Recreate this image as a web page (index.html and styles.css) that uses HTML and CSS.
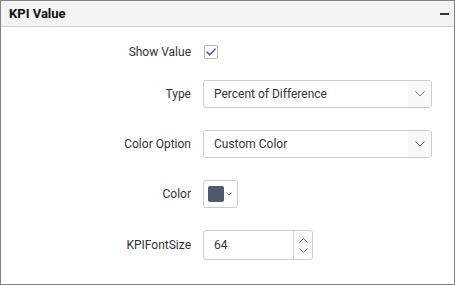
FILE: index.html
```html
<!DOCTYPE html>
<html lang="en">
<head>
  <meta charset="UTF-8" />
  <title>KPI Value</title>
  <link rel="stylesheet" href="styles.css">
</head>
<body>

  <div class="panel">
    <div class="panel-header">
      <span class="panel-title">KPI Value</span>
      <span class="collapse-icon"></span>
    </div>

    <div class="panel-body">
      <div class="field field-check">
        <label class="field-label">Show Value</label>
        <span class="checkbox">
          <svg width="10" height="8" viewBox="0 0 10 8"><path d="M1 4.2 L3.8 6.8 L9 1.2" fill="none" stroke="#3b5bdb" stroke-width="1.6" stroke-linecap="round" stroke-linejoin="round"/></svg>
        </span>
      </div>

      <div class="field">
        <label class="field-label">Type</label>
        <div class="dropdown">
          <span class="dropdown-text">Percent of Difference</span>
          <span class="dropdown-arrow">
            <svg width="10" height="6" viewBox="0 0 10 6"><path d="M0.5 0.5 L5 5 L9.5 0.5" fill="none" stroke="#777" stroke-width="1"/></svg>
          </span>
        </div>
      </div>

      <div class="field">
        <label class="field-label">Color Option</label>
        <div class="dropdown">
          <span class="dropdown-text">Custom Color</span>
          <span class="dropdown-arrow">
            <svg width="10" height="6" viewBox="0 0 10 6"><path d="M0.5 0.5 L5 5 L9.5 0.5" fill="none" stroke="#777" stroke-width="1"/></svg>
          </span>
        </div>
      </div>

      <div class="field">
        <label class="field-label">Color</label>
        <div class="color-picker">
          <span class="swatch"></span>
          <svg width="6" height="4" viewBox="0 0 6 4"><path d="M0.5 0.5 L3 3 L5.5 0.5" fill="none" stroke="#666" stroke-width="0.9"/></svg>
        </div>
      </div>

      <div class="field">
        <label class="field-label">KPIFontSize</label>
        <div class="numeric">
          <span class="numeric-value">64</span>
          <span class="spinner">
            <svg width="9" height="5" viewBox="0 0 9 5"><path d="M0.5 4.5 L4.5 0.5 L8.5 4.5" fill="none" stroke="#777" stroke-width="1"/></svg>
            <svg width="9" height="5" viewBox="0 0 9 5"><path d="M0.5 0.5 L4.5 4.5 L8.5 0.5" fill="none" stroke="#777" stroke-width="1"/></svg>
          </span>
        </div>
      </div>
    </div>
  </div>

</body>
</html>
```

FILE: styles.css
```css
body {
  margin: 0;
  font-family: Roboto, "Liberation Sans", Arial, sans-serif;
  background: white;
}

.panel {
  width: 455px;
  height: 285px;
  box-sizing: border-box;
  border: 1px solid #828282;
  background: white;
}

.panel-header {
  height: 25px;
  background: #f3f3f3;
  border-bottom: 1px solid #cfcfcf;
  display: flex;
  align-items: center;
  justify-content: space-between;
  padding: 0 5px 0 8px;
}

.panel-title {
  font-size: 13px;
  font-weight: bold;
  color: #111;
}

.collapse-icon {
  width: 9px;
  height: 2px;
  background: #333;
  margin-top: 1px;
}

.panel-body {
  display: flex;
  flex-direction: column;
  gap: 22px;
  padding-top: 18px;
}

.field {
  display: grid;
  grid-template-columns: 190px auto;
  column-gap: 12px;
  align-items: center;
  height: 28px;
}

.field-check {
  height: 13px;
}

.field-label {
  text-align: right;
  font-size: 12px;
  color: #333;
}

.checkbox {
  width: 12px;
  height: 12px;
  margin-left: 1px;
  border: 1px solid #b8b8b8;
  border-radius: 2px;
  display: flex;
  align-items: center;
  justify-content: center;
}

.dropdown {
  width: 229px;
  height: 28px;
  box-sizing: border-box;
  border: 1px solid #cdcdcd;
  border-radius: 3px;
  display: flex;
  align-items: center;
  justify-content: space-between;
  overflow: hidden;
}

.dropdown-text {
  padding-left: 10px;
  font-size: 12px;
  color: #333;
}

.dropdown-arrow {
  width: 23px;
  height: 100%;
  background: #f8f8f8;
  display: flex;
  align-items: center;
  justify-content: center;
}

.color-picker {
  width: 35px;
  height: 28px;
  box-sizing: border-box;
  border: 1px solid #cdcdcd;
  border-radius: 3px;
  display: flex;
  align-items: center;
  padding-left: 4px;
  gap: 2px;
}

.swatch {
  width: 16px;
  height: 16px;
  background: #4e5a6c;
  border-radius: 2px;
}

.numeric {
  width: 110px;
  height: 30px;
  box-sizing: border-box;
  border: 1px solid #cdcdcd;
  border-radius: 3px;
  display: flex;
  align-items: center;
  justify-content: space-between;
}

.numeric-value {
  padding-left: 10px;
  font-size: 12px;
  color: #333;
}

.spinner {
  width: 18px;
  height: 100%;
  border-left: 1px solid #d8d8d8;
  display: flex;
  flex-direction: column;
  align-items: center;
  justify-content: center;
  gap: 5px;
}
```
